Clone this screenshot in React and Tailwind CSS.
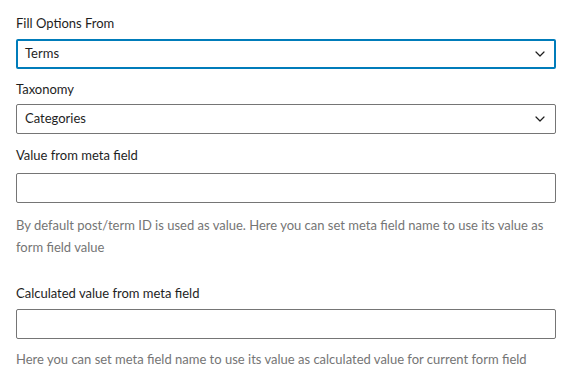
import { ChevronDown } from 'lucide-react'

function Label({ children, className = '' }) {
    return (
        <div className={`text-[13px] leading-5 text-[#1e1e1e] ${className}`}>
            {children}
        </div>
    )
}

function Select({ value, focused }) {
    return (
        <div
            className={`h-[30px] flex items-center justify-between bg-white rounded-[2px] ${
                focused
                    ? 'border-2 border-[#007cba] pl-[7px] pr-[6px]'
                    : 'border border-[#757575] pl-[8px] pr-[7px]'
            }`}
        >
            <span className="text-[13px] text-[#1e1e1e]">{value}</span>
            <ChevronDown size={16} strokeWidth={1.8} className="text-[#1e1e1e]" />
        </div>
    )
}

function TextInput() {
    return (
        <div className="h-[30px] bg-white border border-[#757575] rounded-[2px]" />
    )
}

function Help({ children, className = '' }) {
    return (
        <p className={`text-[13px] leading-[22px] text-[#757575] ${className}`}>
            {children}
        </p>
    )
}

export default function App() {
    return (
        <div
            className="w-[573px] h-[383px] bg-white overflow-hidden"
            style={{ fontFamily: 'Lato, "Liberation Sans", sans-serif' }}
        >
            <div className="w-[540px] ml-[16px] pt-[13px]">
                <Label className="mb-[6px]">Fill Options From</Label>
                <Select value="Terms" focused />

                <Label className="mt-[10px] mb-[5px]">Taxonomy</Label>
                <Select value="Categories" />

                <Label className="mt-[11px] mb-[8px]">Value from meta field</Label>
                <TextInput />
                <Help className="mt-[11px]">
                    By default post/term ID is used as value. Here you can set meta
                    field name to use its value as form field value
                </Help>

                <Label className="mt-[25px] mb-[6px]">
                    Calculated value from meta field
                </Label>
                <TextInput />
                <Help className="mt-[9px]">
                    Here you can set meta field name to use its value as calculated
                    value for current form field
                </Help>
            </div>
        </div>
    )
}
